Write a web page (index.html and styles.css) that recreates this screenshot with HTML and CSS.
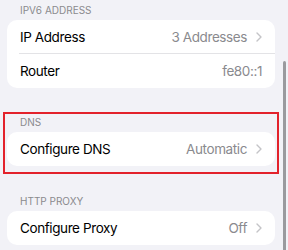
FILE: index.html
```html
<!DOCTYPE html>
<html lang="en">
<head>
<meta charset="utf-8">
<link rel="stylesheet" href="styles.css">
</head>
<body>
<div class="screen">
  <div class="section-header">IPV6 ADDRESS</div>
  <div class="card">
    <div class="row">
      <span class="label">IP Address</span>
      <span class="value">3 Addresses</span>
      <svg class="chevron" width="6" height="10" viewBox="0 0 6 10"><polyline points="1,1 5,5 1,9" fill="none" stroke="#c4c4c7" stroke-width="1.4" stroke-linecap="round" stroke-linejoin="round"/></svg>
    </div>
    <div class="row">
      <span class="label">Router</span>
      <span class="value">fe80::1</span>
    </div>
  </div>
  <div class="outline">
    <div class="section-header short">DNS</div>
    <div class="card">
      <div class="row">
        <span class="label">Configure DNS</span>
        <span class="value">Automatic</span>
        <svg class="chevron" width="6" height="10" viewBox="0 0 6 10"><polyline points="1,1 5,5 1,9" fill="none" stroke="#c4c4c7" stroke-width="1.4" stroke-linecap="round" stroke-linejoin="round"/></svg>
      </div>
    </div>
  </div>
  <div class="section-header tall">HTTP PROXY</div>
  <div class="card">
    <div class="row">
      <span class="label">Configure Proxy</span>
      <span class="value">Off</span>
      <svg class="chevron" width="6" height="10" viewBox="0 0 6 10"><polyline points="1,1 5,5 1,9" fill="none" stroke="#c4c4c7" stroke-width="1.4" stroke-linecap="round" stroke-linejoin="round"/></svg>
    </div>
  </div>
  <div class="scroll-indicator"></div>
</div>
</body>
</html>
```
FILE: styles.css
```css
html, body {
  margin: 0;
  padding: 0;
  background: #f2f2f7;
}
body {
  font-family: Inter, "Noto Sans", sans-serif;
  -webkit-font-smoothing: antialiased;
}
.screen {
  position: relative;
  width: 288px;
  height: 250px;
  overflow: hidden;
  box-sizing: border-box;
  padding: 0 13px 0 7px;
}
.section-header {
  height: 20px;
  box-sizing: border-box;
  display: flex;
  align-items: flex-end;
  padding: 0 0 4px 13px;
  font-size: 10px;
  line-height: 12px;
  color: #8a8a8e;
}
.section-header.short {
  height: 18px;
}
.section-header.tall {
  height: 21px;
  margin-top: 16px;
}
.card {
  background: #ffffff;
  border-radius: 10px;
  overflow: hidden;
}
.row {
  height: 34px;
  display: flex;
  align-items: center;
  padding: 0 13px;
  font-size: 13.5px;
  letter-spacing: -0.4px;
}
.row:not(:last-child) {
  background: linear-gradient(#e3e3e6, #e3e3e6) no-repeat left 12px bottom / calc(100% - 12px) 1px;
}
.label {
  color: #000000;
}
.value {
  margin-left: auto;
  color: #8a8a8e;
}
.chevron {
  margin-left: 9px;
  display: block;
}
.outline {
  margin: 24px -4px 0 -4px;
  border: 2px solid #e3222b;
  padding: 0 2px 6px 2px;
}
.scroll-indicator {
  position: absolute;
  right: 2px;
  top: 61px;
  width: 3px;
  height: 220px;
  border-radius: 1.5px;
  background: #9a9a9e;
}
```
